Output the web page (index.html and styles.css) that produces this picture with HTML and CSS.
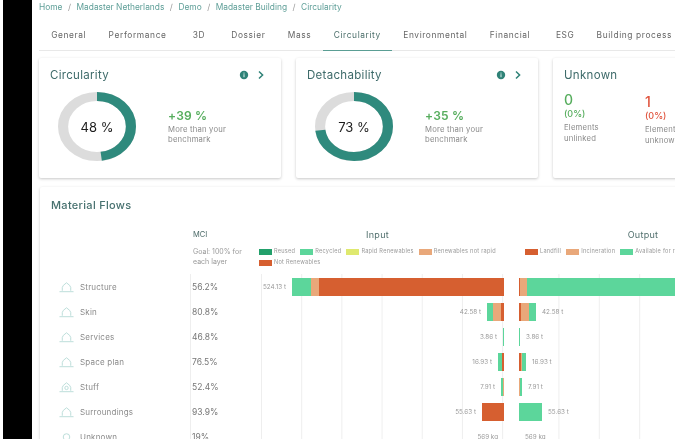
FILE: index.html
```html
<!DOCTYPE html>
<html lang="en">
<head>
<meta charset="utf-8">
<title>Madaster Building - Circularity</title>
<link rel="stylesheet" href="styles.css">
</head>
<body>
<div class="edge"></div>
<div class="rail"></div>
<main class="main">
  <nav class="crumbs">
    <span>Home</span><i>/</i><span>Madaster Netherlands</span><i>/</i><span>Demo</span><i>/</i><span>Madaster Building</span><i>/</i><span>Circularity</span>
  </nav>
  <div class="tabs">
    <span class="tab">General</span>
    <span class="tab">Performance</span>
    <span class="tab tab-wide">3D</span>
    <span class="tab">Dossier</span>
    <span class="tab">Mass</span>
    <span class="tab active">Circularity</span>
    <span class="tab">Environmental</span>
    <span class="tab">Financial</span>
    <span class="tab tab-esg">ESG</span>
    <span class="tab">Building process</span>
  </div>
  <section class="cards">
    <article class="card kpi">
      <header class="card-head">
        <h2>Circularity</h2>
        <svg class="info" viewBox="0 0 10 10"><circle cx="5" cy="5" r="4.2" fill="#2f8277"/><rect x="4.4" y="4.2" width="1.2" height="3" fill="#bfe0db"/><rect x="4.4" y="2.6" width="1.2" height="1" fill="#bfe0db"/></svg>
        <svg class="chev" viewBox="0 0 8 10"><path d="M2 1.5 5.6 5 2 8.5" fill="none" stroke="#2f8277" stroke-width="1.5"/></svg>
      </header>
      <div class="kpi-body">
        <div class="donut">
          <svg viewBox="0 0 100 100" preserveAspectRatio="none"><circle cx="50" cy="50" r="43.5" fill="none" stroke="#dcdcdc" stroke-width="13"/><circle cx="50" cy="50" r="43.5" fill="none" stroke="#2f8a7d" stroke-width="13" pathLength="100" stroke-dasharray="48 52" transform="rotate(-90 50 50)"/></svg>
          <span>48 %</span>
        </div>
        <div class="delta"><b>+39 %</b><p>More than your benchmark</p></div>
      </div>
    </article>
    <article class="card kpi">
      <header class="card-head">
        <h2>Detachability</h2>
        <svg class="info" viewBox="0 0 10 10"><circle cx="5" cy="5" r="4.2" fill="#2f8277"/><rect x="4.4" y="4.2" width="1.2" height="3" fill="#bfe0db"/><rect x="4.4" y="2.6" width="1.2" height="1" fill="#bfe0db"/></svg>
        <svg class="chev" viewBox="0 0 8 10"><path d="M2 1.5 5.6 5 2 8.5" fill="none" stroke="#2f8277" stroke-width="1.5"/></svg>
      </header>
      <div class="kpi-body">
        <div class="donut">
          <svg viewBox="0 0 100 100" preserveAspectRatio="none"><circle cx="50" cy="50" r="43.5" fill="none" stroke="#dcdcdc" stroke-width="13"/><circle cx="50" cy="50" r="43.5" fill="none" stroke="#2f8a7d" stroke-width="13" pathLength="100" stroke-dasharray="73 27" transform="rotate(-90 50 50)"/></svg>
          <span>73 %</span>
        </div>
        <div class="delta"><b>+35 %</b><p>More than your benchmark</p></div>
      </div>
    </article>
    <article class="card unknown">
      <header class="card-head"><h2>Unknown</h2></header>
      <div class="unknown-body">
        <div class="stat good"><strong>0</strong><em>(0%)</em><p>Elements unlinked</p></div>
        <div class="stat bad"><strong>1</strong><em>(0%)</em><p>Elements unknown</p></div>
      </div>
    </article>
  </section>
  <section class="card flows">
    <h2>Material Flows</h2>
    <div class="flow-grid flow-head">
      <div></div>
      <div class="mci-head"><h3>MCI</h3><p>Goal: 100% for each layer</p></div>
      <div class="flow-title input-title">
        <h3>Input</h3>
        <ul class="legend">
          <li><i class="c-reused"></i>Reused</li>
          <li><i class="c-recycled"></i>Recycled</li>
          <li><i class="c-rapid"></i>Rapid Renewables</li>
          <li><i class="c-orange"></i>Renewables not rapid</li>
          <li><i class="c-red"></i>Not Renewables</li>
        </ul>
      </div>
      <div></div>
      <div class="flow-title output-title">
        <h3>Output</h3>
        <ul class="legend">
          <li><i class="c-red"></i>Landfill</li>
          <li><i class="c-orange"></i>Incineration</li>
          <li><i class="c-recycled"></i>Available for recycling</li>
        </ul>
      </div>
    </div>

    <div class="flow-grid row">
      <div class="layer"><svg viewBox="0 0 16 12"><path d="M3.5 10V6.5Q3.5 4.5 8 1.5 12.5 4.5 12.5 6.5V10M.5 11h15" fill="none" stroke="#b9dcd8"/></svg>Structure</div>
      <div class="mci">56.2%</div>
      <div class="in"><span class="qty">524.13 t</span><div class="bar"><i class="c-recycled" style="width:19px"></i><i class="c-orange" style="width:8px"></i><i class="c-red" style="width:185px"></i></div></div>
      <div></div>
      <div class="out"><div class="bar"><i class="c-red" style="width:1px"></i><i class="c-orange" style="width:7px"></i><i class="c-recycled" style="width:240px"></i></div></div>
    </div>
    <div class="flow-grid row">
      <div class="layer"><svg viewBox="0 0 16 12"><path d="M3.5 10V6.5Q3.5 4.5 8 1.5 12.5 4.5 12.5 6.5V10M.5 11h15" fill="none" stroke="#b9dcd8"/></svg>Skin</div>
      <div class="mci">80.8%</div>
      <div class="in"><span class="qty">42.58 t</span><div class="bar"><i class="c-recycled" style="width:6px"></i><i class="c-orange" style="width:8px"></i><i class="c-red" style="width:3px"></i></div></div>
      <div></div>
      <div class="out"><div class="bar"><i class="c-red" style="width:2px"></i><i class="c-orange" style="width:8px"></i><i class="c-recycled" style="width:7px"></i></div><span class="qty">42.58 t</span></div>
    </div>
    <div class="flow-grid row">
      <div class="layer"><svg viewBox="0 0 16 12"><path d="M3.5 10V6.5Q3.5 4.5 8 1.5 12.5 4.5 12.5 6.5V10M.5 11h15" fill="none" stroke="#b9dcd8"/></svg>Services</div>
      <div class="mci">46.8%</div>
      <div class="in"><span class="qty">3.86 t</span><div class="bar"><i class="c-recycled" style="width:1px"></i></div></div>
      <div></div>
      <div class="out"><div class="bar"><i class="c-recycled" style="width:1px"></i></div><span class="qty">3.86 t</span></div>
    </div>
    <div class="flow-grid row">
      <div class="layer"><svg viewBox="0 0 16 12"><path d="M3.5 10V6.5Q3.5 4.5 8 1.5 12.5 4.5 12.5 6.5V10M.5 11h15" fill="none" stroke="#b9dcd8"/></svg>Space plan</div>
      <div class="mci">76.5%</div>
      <div class="in"><span class="qty">16.93 t</span><div class="bar"><i class="c-recycled" style="width:4px"></i><i class="c-red" style="width:2px"></i></div></div>
      <div></div>
      <div class="out"><div class="bar"><i class="c-red" style="width:2px"></i><i class="c-orange" style="width:1px"></i><i class="c-recycled" style="width:4px"></i></div><span class="qty">16.93 t</span></div>
    </div>
    <div class="flow-grid row">
      <div class="layer"><svg viewBox="0 0 16 12"><path d="M3.5 10V6.5Q3.5 4.5 8 1.5 12.5 4.5 12.5 6.5V10M.5 11h15" fill="none" stroke="#b9dcd8"/><circle cx="8" cy="7" r="1.8" fill="none" stroke="#b9dcd8"/></svg>Stuff</div>
      <div class="mci">52.4%</div>
      <div class="in"><span class="qty">7.91 t</span><div class="bar"><i class="c-recycled" style="width:2px"></i><i class="c-orange" style="width:1px"></i></div></div>
      <div></div>
      <div class="out"><div class="bar"><i class="c-orange" style="width:1px"></i><i class="c-recycled" style="width:2px"></i></div><span class="qty">7.91 t</span></div>
    </div>
    <div class="flow-grid row">
      <div class="layer"><svg viewBox="0 0 16 12"><path d="M3.5 10V6.5Q3.5 4.5 8 1.5 12.5 4.5 12.5 6.5V10M.5 11h15" fill="none" stroke="#b9dcd8"/></svg>Surroundings</div>
      <div class="mci">93.9%</div>
      <div class="in"><span class="qty">55.63 t</span><div class="bar"><i class="c-red" style="width:22px"></i></div></div>
      <div></div>
      <div class="out"><div class="bar"><i class="c-recycled" style="width:23px"></i></div><span class="qty">55.63 t</span></div>
    </div>
    <div class="flow-grid row">
      <div class="layer"><svg viewBox="0 0 16 12"><circle cx="8" cy="6" r="3.5" fill="none" stroke="#b9dcd8"/></svg>Unknown</div>
      <div class="mci">19%</div>
      <div class="in"><span class="qty">569 kg</span><div class="bar"></div></div>
      <div></div>
      <div class="out"><div class="bar"></div><span class="qty">569 kg</span></div>
    </div>
  </section>
</main>
</body>
</html>
```

FILE: styles.css
```css
html, body {
  margin: 0;
  height: 439px;
  overflow: hidden;
  background: #fff;
}
body {
  display: flex;
  font-family: "Inter", "Open Sans", sans-serif;
  color: #777;
}
h2, h3, p, ul { margin: 0; padding: 0; font-weight: 400; }
.edge { flex: 0 0 3px; background: #fff; }
.rail { flex: 0 0 29px; background: #000; height: 439px; }
.main {
  flex: 0 0 860px;
  height: 439px;
  overflow: hidden;
  padding-left: 7px;
  filter: blur(0.5px);
}
.crumbs {
  display: flex;
  height: 13px;
  align-items: center;
  gap: 5.5px;
  font-size: 8.4px;
  color: #5f9f98;
}
.crumbs i { font-style: normal; color: #999; }
.tabs {
  display: flex;
  height: 38px;
  border-bottom: 1px solid #e8e8e8;
  box-sizing: border-box;
  margin-right: 185px;
  padding-left: 1px;
}
.tab {
  box-sizing: border-box;
  height: 38px;
  padding: 17px 11.2px 0;
  font-size: 8.4px;
  letter-spacing: .6px;
  color: #666;
  white-space: nowrap;
}
.tab-wide { padding: 17px 15px 0; }
.tab-esg { padding: 17px 11px 0 14.5px; }
.active { color: #4c6f6b; border-bottom: 1.5px solid #5a9e94; }
.cards {
  display: flex;
  gap: 15px;
  padding-top: 7px;
}
.card {
  box-sizing: border-box;
  background: #fff;
  box-shadow: 0 1px 3px rgba(0, 0, 0, .22);
  border-radius: 2px;
}
.kpi { flex: 0 0 242px; height: 120px; padding: 10px 0 0 11px; }
.unknown { flex: 0 0 240px; height: 120px; padding: 10px 0 0 11px; }
.card-head { display: flex; align-items: center; height: 14px; padding-right: 16px; }
.card-head h2 { flex: 1; font-size: 11.5px; color: #3e6b6a; letter-spacing: .3px; }
.info { width: 10px; height: 10px; margin-right: 8px; }
.chev { width: 8px; height: 10px; }
.kpi-body { display: flex; align-items: center; padding: 10px 0 0 8px; }
.donut { position: relative; width: 78px; height: 69px; margin-right: 32px; }
.donut svg { display: block; width: 78px; height: 69px; }
.donut span {
  position: absolute;
  inset: 0;
  display: flex;
  align-items: center;
  justify-content: center;
  font-size: 13px;
  color: #1c1c1c;
}
.delta b { display: block; font-size: 12px; font-weight: 600; color: #56ad5d; letter-spacing: .2px; margin-bottom: 2px; }
.delta p { width: 80px; font-size: 7.7px; line-height: 10.5px; color: #8a8a8a; letter-spacing: .2px; }
.unknown-body { display: flex; gap: 40px; padding-top: 10px; }
.stat { width: 41px; white-space: nowrap; }
.stat strong { display: block; font-size: 14px; line-height: 16px; font-weight: 500; }
.stat em { display: block; font-style: normal; font-size: 9px; line-height: 12px; font-weight: 500; }
.stat p { margin-top: 2px; font-size: 7.7px; line-height: 11px; color: #8a8a8a; white-space: normal; letter-spacing: .2px; }
.good { color: #56ad5d; }
.bad { color: #e0533d; margin-top: 2px; }
.flows {
  margin: 9px 0 0 1px;
  height: 300px;
  padding-top: 11px;
}
.flows h2 {
  height: 14px;
  line-height: 14px;
  padding-left: 11px;
  font-size: 11px;
  font-weight: 500;
  color: #47716f;
  letter-spacing: .3px;
}
.flow-grid {
  display: grid;
  grid-template-columns: 150px 71px 243px 15px 248px;
}
.flow-head { padding-top: 17px; height: 45px; }
.mci-head h3 { font-size: 7.5px; line-height: 12px; color: #4d6b69; padding-left: 3px; }
.mci-head p { margin-top: 6px; width: 62px; padding-left: 3px; font-size: 7px; line-height: 10px; color: #999; }
.flow-title h3 { text-align: center; font-size: 9px; line-height: 12px; color: #52706e; letter-spacing: .3px; }
.input-title h3 { padding-right: 10px; }
.legend { display: flex; flex-wrap: wrap; list-style: none; column-gap: 5px; margin-top: 5px; font-size: 5.6px; line-height: 11px; color: #999; letter-spacing: .25px; }
.input-title .legend { margin-left: -2px; }
.output-title .legend { padding-left: 6px; }
.legend li { display: flex; align-items: center; gap: 2px; white-space: nowrap; }
.legend i { width: 13px; height: 6px; }
.row { height: 25px; align-items: stretch; }
.layer {
  display: flex;
  align-items: center;
  gap: 6px;
  padding: 1px 0 0 19px;
  font-size: 8px;
  letter-spacing: .2px;
  color: #8a8a8a;
}
.layer svg { width: 15px; height: 12px; }
.mci {
  display: flex;
  align-items: center;
  padding-left: 1px;
  border-left: 1px solid #eee;
  font-size: 8.5px;
  color: #777;
}
.in, .out {
  display: flex;
  align-items: center;
  gap: 6px;
  font-size: 6.3px;
  color: #999;
  background-repeat: repeat-x;
}
.in { justify-content: flex-end; background-size: 40.2px 100%; background-image: linear-gradient(90deg, #eee 1px, transparent 1px); }
.out { background-size: 40.4px 100%; background-image: linear-gradient(90deg, transparent 39.4px, #eee 39.4px); }
.bar { display: flex; height: 18px; flex: none; }
.bar i { display: block; height: 18px; }
.c-reused { background: #22a06b; }
.c-recycled { background: #5cd69b; }
.c-rapid { background: #dfe96f; }
.c-orange { background: #e9a87a; }
.c-red { background: #d65f30; }
```
